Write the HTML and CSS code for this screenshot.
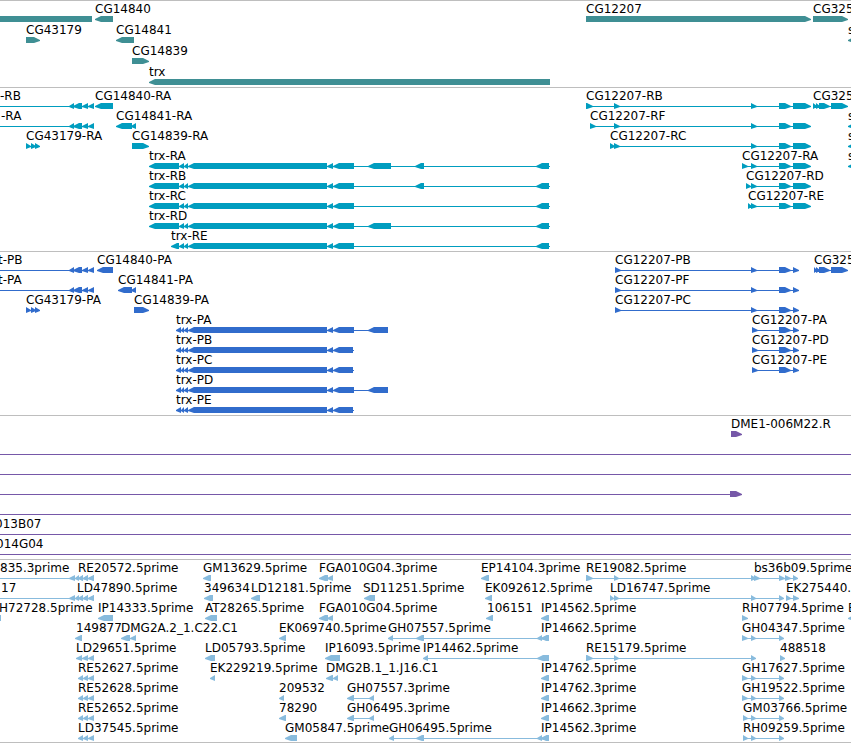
FILE: index.html
```html
<!DOCTYPE html>
<html lang="en">
<head>
    <meta charset="UTF-8">
    <meta name="viewport" content="width=device-width, initial-scale=1.0">
    <title>Genome Browser</title>
    <link rel="stylesheet" href="styles.css">
</head>
<body>
    <main class="browser">
        <section class="track genes" id="genes" aria-label="Genes"></section>
        <section class="track transcripts" id="transcripts" aria-label="Transcripts"></section>
        <section class="track proteins" id="proteins" aria-label="Coding sequences"></section>
        <section class="track clones" id="clones" aria-label="Clones"></section>
        <section class="track ests" id="ests" aria-label="ESTs"></section>
    </main>
    <script src="tracks.js"></script>
</body>
</html>
```
FILE: styles.css
```css
body {
    font-family: "DejaVu Sans", Verdana, sans-serif;
    font-size: 12px;
    line-height: 16px;
    color: #000;
    background-color: #fff;
    margin: 0;
}
.browser {
    overflow: hidden;
    border-bottom: 1px solid #bebebe;
}
.track {
    border-top: 1px solid #bebebe;
    padding-bottom: 3px;
}
.row {
    position: relative;
    height: 20px;
}
.genes {
    color: #3f8f94;
    padding-bottom: 2px;
}
.genes .row {
    height: 21px;
}
.transcripts {
    color: #009dbf;
}
.proteins {
    color: #316ccc;
}
.clones {
    color: #7658a8;
}
.ests {
    color: #88bbdd;
    padding-bottom: 2px;
}

/* labels and glyphs sit at their sequence position in the row */
.label {
    position: absolute;
    top: 0;
    color: #000;
    white-space: nowrap;
}
.glyph {
    position: absolute;
    top: 15px;
    left: 0;
    width: 100%;
    height: 6px;
    overflow: visible;
    fill: currentColor;
}
```
FILE: tracks.js
```javascript
// Each feature is [label, label position, strand, exons, line end (optional)]
const leftExons = '-10--5,69-74,73-82,82-88,88-94';
const estLeft = '-10--5,69-75,75-79,79-83,83-88,88-94';
const estSmall = '78-83,83-88,88-94';
const rEnd = '751-757,779-791,793-811';
const pEnd = '779-791,793-799';
const trxBody = '179-184,184-188,188-327,327-333,333-354';
const trxCds = '176-181,181-184,184-188,188-327,327-333,';
const ghEnd = ',751-756,779-784';

const tracks = {
    genes: [
        [['', 0, '<', '-10-92'], ['CG14840', 95, '<', '95-113'],
         ['CG12207', 586, '>', '586-811'], ['CG325', 813, '>', '813-848']],
        [['CG43179', 26, '>', '26-40'], ['CG14841', 116, '<', '116-134'], ['s', 848, '<', '848-860']],
        [['CG14839', 132, '>', '132-149']],
        [['trx', 149, '<', '149-550']]
    ],
    transcripts: [
        [['-RB', 0, '<', leftExons], ['CG14840-RA', 95, '<', '95-113'],
         ['CG12207-RB', 586, '>', '586-593,614-620,' + rEnd],
         ['CG325', 813, '>', '813-817,816-820,819-830,831-848']],
        [['-RA', 1, '<', leftExons], ['CG14841-RA', 116, '<', '116-132,131-136'],
         ['CG12207-RF', 590, '>', '590-596,614-620,' + rEnd], ['s', 848, '<', '848-860']],
        [['CG43179-RA', 26, '>', '26-31,31-36,35-40'], ['CG14839-RA', 132, '>', '132-149'],
         ['CG12207-RC', 610, '>', '610-615,614-620,' + rEnd], ['s', 848, '<', '848-860']],
        [['trx-RA', 149, '<', '149-179,' + trxBody + ',368-391,415-424,536-549', 550],
         ['CG12207-RA', 742, '>', '742-748,' + rEnd], ['s', 848, '<', '848-860']],
        [['trx-RB', 149, '<', '149-179,' + trxBody + ',415-424,536-549', 550],
         ['CG12207-RD', 746, '>', '746-751,' + rEnd]],
        [['trx-RC', 149, '<', '149-179,' + trxBody + ',536-549', 550],
         ['CG12207-RE', 748, '>', '748-752,' + rEnd]],
        [['trx-RD', 149, '<', '149-179,' + trxBody + ',368-391,536-549', 550]],
        [['trx-RE', 171, '<', '171-179,' + trxBody + ',536-549', 550]]
    ],
    proteins: [
        [['t-PB', -2, '<', leftExons], ['CG14840-PA', 97, '<', '97-113'],
         ['CG12207-PB', 615, '>', '615-621,751-757,' + pEnd],
         ['CG325', 814, '>', '814-817,816-820,819-830,831-848']],
        [['t-PA', -2, '<', leftExons], ['CG14841-PA', 118, '<', '118-132,131-136'],
         ['CG12207-PF', 615, '>', '615-621,751-757,' + pEnd]],
        [['CG43179-PA', 26, '>', '26-31,31-36,35-40'], ['CG14839-PA', 134, '>', '134-149'],
         ['CG12207-PC', 615, '>', '615-621,751-757,' + pEnd]],
        [['trx-PA', 176, '<', trxCds + '333-354,368-388'], ['CG12207-PA', 752, '>', '752-758,' + pEnd]],
        [['trx-PB', 176, '<', trxCds + '333-353', 354], ['CG12207-PD', 752, '>', '752-758,' + pEnd]],
        [['trx-PC', 176, '<', trxCds + '333-353', 354], ['CG12207-PE', 752, '>', '752-758,' + pEnd]],
        [['trx-PD', 176, '<', trxCds + '333-354,368-388']],
        [['trx-PE', 176, '<', trxCds + '333-353', 354]]
    ],
    clones: [
        [['DME1-006M22.R', 731, '>', '731-742']],
        [['', 0, '>', '-10--5', 4000]],
        [['', 0, '>', '-10--5', 4000]],
        [['', 0, '>', '-10--5,730-742']],
        [['', 0, '>', '-10--5', 4000]],
        [['013B07', -5, '>', '-10--5', 4000]],
        [['014G04', -4, '>', '-10--5', 4000]]
    ],
    ests: [
        [['835.3prime', 0, '<', estLeft], ['RE20572.5prime', 78, '<', estSmall],
         ['GM13629.5prime', 203, '<', '203-211'], ['FGA010G04.3prime', 319, '<', '319-328,327-333'],
         ['EP14104.3prime', 481, '<', '481-489'], ['RE19082.5prime', 586, '>', '586-593,614-619,751-756'],
         ['bs36b09.5prime', 754, '>', '754-760,779-785,785-791,793-798']],
        [['17', 1, '<', estLeft], ['LD47890.5prime', 77, '<', estSmall],
         ['349634', 204, '<', '204-213'], ['LD12181.5prime', 251, '<', '251-260'],
         ['SD11251.5prime', 363, '<', '364-375'], ['EK092612.5prime', 485, '<', '485-492'],
         ['LD16747.5prime', 610, '>', '610-614,614-619' + ghEnd],
         ['EK275440.', 786, '>', '786-791,793-799']],
        [['H72728.5prime', -1, '<', '-8-1'], ['IP14333.5prime', 98, '<', '98-113'],
         ['AT28265.5prime', 205, '<', '205-217'], ['FGA010G04.5prime', 319, '<', '319-328,327-333'],
         ['106151', 487, '<', '486-493'], ['IP14562.5prime', 541, '<', '541-549'],
         ['RH07794.5prime', 742, '>', '742-748'], ['E', 848, '<', '848-860']],
        [['149877', 76, '<', '75-82'], ['DMG2A.2_1.C22.C1', 121, '<', '121-130,130-136'],
         ['EK069740.5prime', 279, '<', '279-286'], ['GH07557.5prime', 388, '<', '388-393,416-424,537-542,541-549'],
         ['IP14662.5prime', 541, '<', '541-549'], ['GH04347.5prime', 742, '>', '742-748' + ghEnd]],
        [['LD29651.5prime', 76, '<', '76-82,82-88,88-94'], ['LD05793.5prime', 205, '<', '205-215'],
         ['IP16093.5prime', 325, '<', '325-340'], ['IP14462.5prime', 423, '<', '423-428,537-549'],
         ['RE15179.5prime', 586, '>', '586-593,614-619,751-756'], ['488518', 780, '>', '780-785']],
        [['RE52627.5prime', 78, '<', estSmall], ['EK229219.5prime', 210, '<', '210-215'],
         ['DMG2B.1_1.J16.C1', 326, '<', '326-333,333-338'], ['IP14762.5prime', 541, '<', '541-549'],
         ['GH17627.5prime', 742, '>', '742-748' + ghEnd]],
        [['RE52628.5prime', 78, '<', estSmall], ['209532', 279, '<', '279-284'],
         ['GH07557.3prime', 347, '<', '347-354,369-374'], ['IP14762.3prime', 541, '<', '541-549'],
         ['GH19522.5prime', 742, '>', '742-748' + ghEnd]],
        [['RE52652.5prime', 78, '<', estSmall], ['78290', 279, '<', '279-286'],
         ['GH06495.3prime', 347, '<', '347-354,369-374'], ['IP14662.3prime', 541, '<', '541-549'],
         ['GM03766.5prime', 743, '>', '743-748' + ghEnd]],
        [['LD37545.5prime', 78, '<', estSmall], ['GM05847.5prime', 285, '<', '285-297'],
         ['GH06495.5prime', 389, '<', '389-394,416-424,537-542,541-549'],
         ['IP14562.3prime', 541, '<', '541-549'], ['RH09259.5prime', 743, '>', '743-748' + ghEnd]]
    ]
};

// Exon box with a pointed end in the strand direction
function exonPath(a, b, strand) {
    const tip = Math.min(b - a, 6);
    if (strand === '<') {
        return `M${a} 3L${a + tip} 0H${b}V6H${a + tip}L${a} 4Z`;
    }
    return `M${b} 3L${b - tip} 0H${a}V6H${b - tip}L${b} 4Z`;
}

function drawRow(features) {
    let labels = '';
    let shapes = '';
    features.forEach(([name, left, strand, exons, lineEnd]) => {
        const boxes = exons.split(',').map(e => e.match(/^(-?\d+)-(-?\d+)$/).slice(1).map(Number));
        const start = boxes[0][0];
        const end = lineEnd || boxes[boxes.length - 1][1];
        if (boxes.length > 1 || lineEnd) {
            shapes += `<rect x="${start}" y="3" width="${end - start}" height="1"/>`;
        }
        shapes += `<path d="${boxes.map(([a, b]) => exonPath(a, b, strand)).join('')}"/>`;
        if (name) {
            labels += `<span class="label" style="left: ${left}px">${name}</span>`;
        }
    });
    return `<div class="row"><svg class="glyph" aria-hidden="true">${shapes}</svg>${labels}</div>`;
}

Object.keys(tracks).forEach(id => {
    document.getElementById(id).innerHTML = tracks[id].map(drawRow).join('');
});
```
